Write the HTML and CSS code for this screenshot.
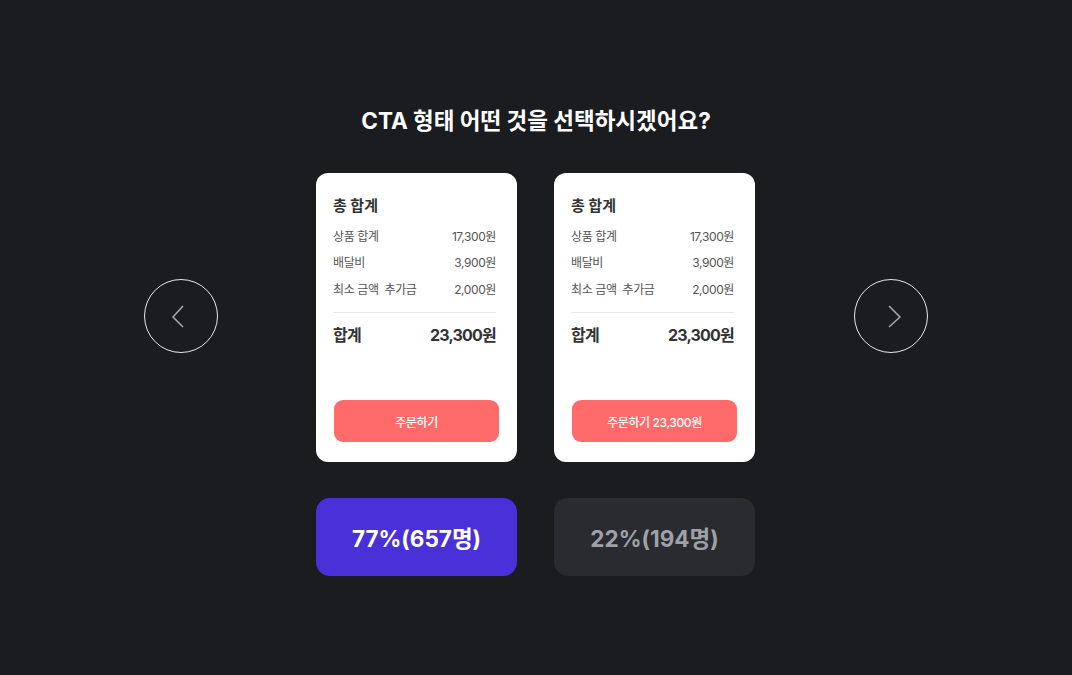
FILE: index.html
```html
<!DOCTYPE html>
<html lang="ko">
<head>
<meta charset="utf-8">
<title>CTA 투표</title>
<link rel="stylesheet" href="styles.css">
</head>
<body>
<main class="page">
  <h1 class="title">CTA 형태 어떤 것을 선택하시겠어요?</h1>
  <div class="stage">
    <button class="nav" aria-label="이전">
      <svg width="74" height="74" viewBox="0 0 74 74"><circle cx="37" cy="37" r="36.5" fill="none" stroke="#e6e6e6" stroke-width="1"/><polyline points="39,27 29,38 39,48" fill="none" stroke="#a8a8a8" stroke-width="1.5"/></svg>
    </button>
    <div class="cards">
      <section class="card">
        <h2 class="card-title">총 합계</h2>
        <div class="rows">
          <div class="row"><span>상품 합계</span><span>17,300원</span></div>
          <div class="row"><span>배달비</span><span>3,900원</span></div>
          <div class="row"><span>최소 금액&nbsp; 추가금</span><span>2,000원</span></div>
        </div>
        <div class="total"><span>합계</span><span>23,300원</span></div>
        <div class="cta">주문하기</div>
      </section>
      <section class="card">
        <h2 class="card-title">총 합계</h2>
        <div class="rows">
          <div class="row"><span>상품 합계</span><span>17,300원</span></div>
          <div class="row"><span>배달비</span><span>3,900원</span></div>
          <div class="row"><span>최소 금액&nbsp; 추가금</span><span>2,000원</span></div>
        </div>
        <div class="total"><span>합계</span><span>23,300원</span></div>
        <div class="cta">주문하기 23,300원</div>
      </section>
    </div>
    <button class="nav" aria-label="다음">
      <svg width="74" height="74" viewBox="0 0 74 74"><circle cx="37" cy="37" r="36.5" fill="none" stroke="#e6e6e6" stroke-width="1"/><polyline points="35,27 46,38 35,48" fill="none" stroke="#a8a8a8" stroke-width="1.5"/></svg>
    </button>
  </div>
  <div class="results">
    <div class="result result-win">77%(657명)</div>
    <div class="result result-lose">22%(194명)</div>
  </div>
</main>
</body>
</html>
```
FILE: styles.css
```css
* { box-sizing: border-box; }
html, body { margin: 0; padding: 0; }
body {
  background: #1b1c20;
  width: 1072px;
  height: 675px;
  overflow: hidden;
  font-family: "Inter", "Noto Sans CJK KR", sans-serif;
}
.page {
  display: flex;
  flex-direction: column;
  align-items: center;
  padding-top: 106px;
}
.title {
  margin: 0 0 37px;
  font-size: 22.5px;
  line-height: 30px;
  font-weight: 700;
  color: #ffffff;
}
.stage {
  display: flex;
  align-items: flex-start;
}
.nav {
  width: 74px;
  height: 74px;
  margin-top: 106px;
  padding: 0;
  border: 0;
  background: none;
  display: block;
}
.nav svg { display: block; }
.cards {
  display: flex;
  gap: 37px;
  margin: 0 99px 0 98px;
}
.card {
  width: 201px;
  height: 289px;
  background: #ffffff;
  border-radius: 12px;
  padding: 23px 16px 20px 17px;
  display: flex;
  flex-direction: column;
  font-family: "Inter", "Noto Sans CJK KR", sans-serif;
}
.card-title {
  margin: 0;
  font-size: 15px;
  line-height: 20px;
  font-weight: 700;
  color: #333333;
}
.rows {
  margin-top: 6px;
  margin-right: 5px;
}
.row {
  display: flex;
  justify-content: space-between;
  align-items: center;
  height: 26.5px;
  font-size: 12px;
  color: #555555;
  letter-spacing: -0.4px;
}
.total {
  margin-top: 10.5px;
  margin-right: 5px;
  border-top: 1px solid #e8e8e8;
  height: 42px;
  display: flex;
  justify-content: space-between;
  align-items: center;
  font-size: 16px;
  font-weight: 700;
  color: #333333;
  letter-spacing: -0.8px;
}
.cta {
  margin-top: auto;
  margin-left: 1px;
  margin-right: 2px;
  height: 42px;
  border-radius: 9px;
  background: #ff6b6b;
  color: #ffffff;
  font-size: 12px;
  font-weight: 500;
  display: flex;
  align-items: center;
  justify-content: center;
  letter-spacing: -0.4px;
}
.results {
  display: flex;
  gap: 37px;
  margin-top: 36px;
  margin-right: 1px;
}
.result {
  width: 201px;
  height: 78px;
  border-radius: 14px;
  display: flex;
  align-items: center;
  justify-content: center;
  font-size: 22.5px;
  font-weight: 700;
}
.result-win {
  background: #4a30d8;
  color: #ffffff;
}
.result-lose {
  background: #2a2b30;
  color: #9ea1a8;
}
```
